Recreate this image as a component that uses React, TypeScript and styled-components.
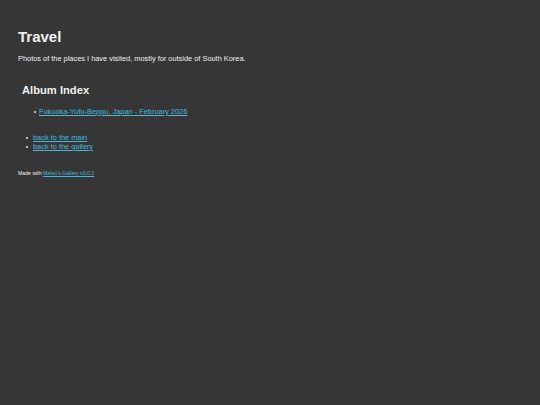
import React from "react";
import styled, { createGlobalStyle } from "styled-components";

const GlobalStyle = createGlobalStyle`
  html, body {
    margin: 0;
    background: #363636;
  }
  body {
    font-family: "Liberation Sans", Arial, sans-serif;
    color: #f0f0f0;
  }
`;

const Page = styled.div`
  min-height: 405px;
  padding: 28px 18px;
  box-sizing: border-box;
`;

const Title = styled.h1`
  margin: 0 0 8px;
  font-size: 15px;
  font-weight: bold;
  line-height: 18px;
`;

const Lead = styled.p`
  margin: 0 0 20px;
  font-size: 7.4px;
  line-height: 9px;
`;

const Section = styled.section`
  padding-left: 4px;
`;

const SectionTitle = styled.h2`
  margin: 0 0 10px;
  font-size: 11.2px;
  line-height: 14px;
  font-weight: bold;
`;

const List = styled.ul<{ $indent: number; $gap: number }>`
  margin: 0 0 ${(p) => p.$gap}px;
  padding-left: ${(p) => p.$indent}px;
  font-size: 7.4px;
  line-height: 9px;
  list-style: none;
`;

const Item = styled.li<{ $offset: number }>`
  &::before {
    content: "";
    display: inline-block;
    width: 2px;
    height: 2px;
    border-radius: 50%;
    background: #e8e8e8;
    vertical-align: middle;
    margin-left: -${(p) => p.$offset}px;
    margin-right: ${(p) => p.$offset - 2}px;
  }
`;

const Link = styled.a`
  color: #4ab8dc;
`;

const Footer = styled.p`
  margin: 0;
  font-size: 5.2px;
  line-height: 7px;
`;

export default function App() {
  return (
    <>
      <GlobalStyle />
      <Page>
        <Title>Travel</Title>
        <Lead>Photos of the places I have visited, mostly for outside of South Korea.</Lead>
        <Section>
          <SectionTitle>Album Index</SectionTitle>
          <List $indent={17} $gap={17}>
            <Item $offset={5}>
              <Link href="#">Fukuoka-Yufu-Beppu, Japan - February 2026</Link>
            </Item>
          </List>
        </Section>
        <List $indent={15} $gap={19}>
          <Item $offset={7}>
            <Link href="#">back to the main</Link>
          </Item>
          <Item $offset={7}>
            <Link href="#">back to the gallery</Link>
          </Item>
        </List>
        <Footer>
          Made with <Link href="#">Melon's Gallery v0.0.2</Link>
        </Footer>
      </Page>
    </>
  );
}
